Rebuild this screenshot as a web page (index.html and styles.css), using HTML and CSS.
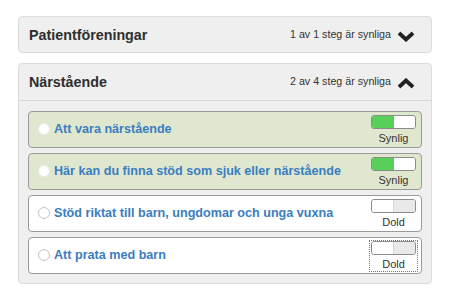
FILE: index.html
```html
<!DOCTYPE html>
<html lang="sv">
<head>
  <meta charset="UTF-8">
  <meta name="viewport" content="width=device-width, initial-scale=1.0">
  <title>Steg</title>
  <link rel="stylesheet" href="styles.css">
</head>
<body>
  <div class="wrap">
    <div class="panel">
      <div class="panel-head">
        <h2>Patientföreningar</h2>
        <span class="count">1 av 1 steg är synliga</span>
        <svg class="chevron" width="18" height="11" viewBox="0 0 18 11"><polyline points="2,2 9,8.5 16,2"/></svg>
      </div>
    </div>

    <div class="panel">
      <div class="panel-head open">
        <h2>Närstående</h2>
        <span class="count">2 av 4 steg är synliga</span>
        <svg class="chevron" width="18" height="11" viewBox="0 0 18 11"><polyline points="2,9 9,2.5 16,9"/></svg>
      </div>
      <div class="panel-body">
        <div class="step on">
          <span class="radio"></span>
          <span class="title">Att vara närstående</span>
          <div class="toggle-box">
            <div class="toggle"><span></span><span></span></div>
            <span class="state">Synlig</span>
          </div>
        </div>
        <div class="step on">
          <span class="radio"></span>
          <span class="title">Här kan du finna stöd som sjuk eller närstående</span>
          <div class="toggle-box">
            <div class="toggle"><span></span><span></span></div>
            <span class="state">Synlig</span>
          </div>
        </div>
        <div class="step">
          <span class="radio"></span>
          <span class="title">Stöd riktat till barn, ungdomar och unga vuxna</span>
          <div class="toggle-box">
            <div class="toggle"><span></span><span></span></div>
            <span class="state">Dold</span>
          </div>
        </div>
        <div class="step">
          <span class="radio"></span>
          <span class="title">Att prata med barn</span>
          <div class="toggle-box focus">
            <div class="toggle"><span></span><span></span></div>
            <span class="state">Dold</span>
          </div>
        </div>
      </div>
    </div>
  </div>
</body>
</html>
```

FILE: styles.css
```css
* {
  box-sizing: border-box;
}
body {
  margin: 0;
  background: #fff;
  font-family: 'Liberation Sans', Arial, sans-serif;
  color: #333;
}
.wrap {
  width: 414px;
  margin: 16px 0 0 18px;
}
.panel {
  background: #efefef;
  border: 1px solid #dcdcdc;
  border-radius: 4px;
  margin-bottom: 10px;
}
.panel-head {
  display: flex;
  align-items: center;
  height: 35px;
  padding: 0 16px 0 10px;
}
.panel-head.open {
  height: 37px;
  border-bottom: 1px solid #d8d8d8;
}
.panel-head h2 {
  margin: 0;
  flex-grow: 1;
  font-size: 14.3px;
  font-weight: bold;
  color: #2e2e2e;
}
.count {
  font-size: 10.7px;
  color: #333;
  margin-right: 6px;
  margin-top: -2px;
}
.chevron {
  margin-top: 3px;
}
.chevron polyline {
  fill: none;
  stroke: #222;
  stroke-width: 3.8;
}
.panel-body {
  padding: 10px 9px 9px 9px;
}
.step {
  display: flex;
  align-items: center;
  height: 37px;
  margin-bottom: 5px;
  padding: 0 4px 0 9px;
  background: #fff;
  border: 1px solid #9a9a9a;
  border-radius: 4px;
}
.step:last-child {
  margin-bottom: 0;
}
.step.on {
  background: #dfe8cf;
}
.radio {
  width: 12px;
  height: 12px;
  border-radius: 50%;
  background: #fff;
  border: 1px solid #c4c4c4;
  margin-right: 4px;
  margin-top: -2px;
}
.step.on .radio {
  border-color: #e8ede2;
}
.title {
  flex-grow: 1;
  font-size: 12.6px;
  font-weight: bold;
  color: #3b7dc1;
  margin-top: -2px;
}
.toggle-box {
  align-self: flex-start;
  display: flex;
  flex-direction: column;
  align-items: center;
  width: 47px;
  margin-top: 3px;
}
.toggle-box.focus {
  outline: 1px dotted #777;
}
.toggle {
  display: flex;
  width: 45px;
  height: 14px;
  border: 1px solid #8c8c8c;
  border-radius: 3px;
  overflow: hidden;
}
.toggle span {
  flex: 1;
  background: #fff;
}
.step .toggle span:last-child {
  background: #e9e9e9;
  border-left: 1px solid #d6d6d6;
}
.step.on .toggle span:first-child {
  background: #58cf58;
}
.step.on .toggle span:last-child {
  background: #fff;
  border-left: none;
}
.state {
  font-size: 11px;
  line-height: 13px;
  margin-top: 3px;
  color: #333;
}
```
